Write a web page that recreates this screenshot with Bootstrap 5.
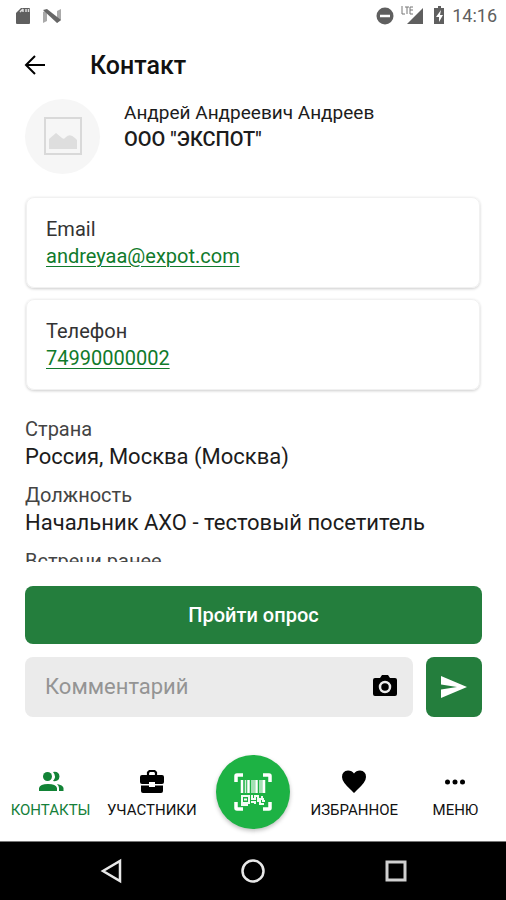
<!DOCTYPE html>
<html lang="ru">
<head>
<meta charset="utf-8">
<meta name="viewport" content="width=device-width, initial-scale=1">
<title>Контакт</title>
<link href="https://cdn.jsdelivr.net/npm/bootstrap@5.3.0/dist/css/bootstrap.min.css" rel="stylesheet">
<style>
  :root { --brand: #247e3d; --accent: #1db244; }
  body { font-family: Roboto, "Noto Sans", sans-serif; font-size: 20px; line-height: 28px; color: #1c1c1c; background: #fff; }
  svg { display: block; flex-shrink: 0; }
  .screen { height: 100vh; min-height: 640px; }
  .status-bar { height: 32px; padding: 0 9px 0 12px; font-size: 18px; color: #5f5f5f; }
  .app-bar { height: 67px; padding: 0 24px; gap: 43px; }
  .app-bar h1 { font-size: 25px; line-height: 32px; font-weight: 500; color: #111; }
  .back-btn { color: #000; }
  .content-area { padding: 0 25px; min-height: 0; }
  .avatar { width: 75px; height: 75px; background: #f6f6f6; }
  .person { font-size: 19px; line-height: 26px; padding-top: 1px; }
  .person h2 { font-size: 20px; line-height: 26px; font-weight: 500; }
  .card-stack { gap: 11px; margin-top: 23px; }
  .info-card { padding: 18px 19px 17px; border-radius: 8px; border: 1px solid #f1f1f1; box-shadow: 0 1px 3px rgba(0,0,0,.2); line-height: 27px; margin: 0 1px; }
  .info-card a { color: #107a2b; text-underline-offset: 3px; text-decoration-thickness: 1px; }
  .info-label { color: #333; }
  .facts { margin-top: 25px; }
  .facts dt { font-weight: 400; color: #444; }
  .facts dd { margin-bottom: 10px; font-size: 22px; }
  .actions { padding: 24px 24px 0 25px; gap: 13px; }
  .survey-btn { height: 58px; font-size: 20px; font-weight: 500; }
  .brand-btn, .brand-btn:hover { background: var(--brand); color: #fff; border: 0; border-radius: 8px; }
  .comment-row { gap: 13px; }
  .comment-box { background: #ebebeb; border-radius: 8px; height: 60px; padding: 0 14px 0 20px; }
  .comment-box input { font-size: 22px; line-height: 28px; outline: 0; min-width: 0; }
  .comment-box input::placeholder { color: #949494; opacity: 1; }
  .send-btn { width: 56px; height: 60px; }
  .tabs { height: 124px; font-size: 15px; line-height: 20px; padding-top: 38px; }
  .tab-slot { flex: 1 1 0; min-width: 0; }
  .tabs a { color: #111; gap: 4px; white-space: nowrap; height: 60px; padding-top: 13px; }
  .tabs a.current { color: #15803a; }
  .tabs .scan-btn { width: 74px; height: 74px; background: var(--accent); box-shadow: 0 2px 4px rgba(0,0,0,.25); }
  .system-bar { height: 59px; border-top: 1px solid #777; background: #000; }
  .system-bar button { flex: 0 0 28%; }
</style>
<script src="https://cdn.jsdelivr.net/npm/bootstrap@5.3.0/dist/js/bootstrap.bundle.min.js"></script>
</head>
<body>
<div class="screen d-flex flex-column overflow-hidden">
  <div class="status-bar d-flex justify-content-between align-items-center flex-shrink-0">
    <div class="d-flex align-items-center gap-2">
      <svg width="22" height="20" viewBox="0 0 22 20"><path d="M4 7l5-5h8q1 0 1 1v14q0 1-1 1H5q-1 0-1-1z" fill="#5f5f5f"/><path d="M8 6l3-3M11 6V3M14 6V3M16.500 6V3" stroke="#ddd" stroke-width="1.500"/></svg>
      <svg width="22" height="20" viewBox="0 0 22 20"><path d="M1 17V6l4-2v11zM15 5l4-2v11l-4 3z" fill="#aaa"/><path d="M1 4l4-1 14 11-4 3z" fill="#666"/></svg>
    </div>
    <div class="d-flex align-items-center">
      <svg width="78" height="24" viewBox="0 0 78 24"><circle cx="11" cy="12" r="8.500" fill="#5f5f5f"/><path d="M6 12h10" stroke="#fff" stroke-width="2.500"/><path d="M49 4v16H33z" fill="#5f5f5f"/><path d="M28 2v8h3M31 3h4M33 3v7M39 3h-3v7h3M36 6h3" fill="none" stroke="#777"/><path d="M62 4h2V2h3v2h3v16H60V4z" fill="#5f5f5f"/><path d="M67 6l-5 7h3v5l4-7h-3z" fill="#fff"/></svg>
      <span>14:16</span>
    </div>
  </div>

  <header class="app-bar d-flex align-items-center flex-shrink-0">
    <button type="button" class="back-btn btn p-0 border-0" aria-label="Назад"><svg width="23" height="24" viewBox="0 0 23 24" fill="none" stroke="#000" stroke-width="2"><path d="M21 11H3M11 2l-9 9 9 9"/></svg></button>
    <h1 class="m-0">Контакт</h1>
  </header>

  <main class="content-area flex-fill overflow-hidden">
    <section class="d-flex gap-4">
      <div class="avatar rounded-circle d-flex align-items-center justify-content-center flex-shrink-0">
        <svg width="40" height="40" viewBox="0 0 40 40"><path d="M2 1h36v36H2z" fill="none" stroke="#d9d9d9" stroke-width="2"/><path d="M6 32V22l7-6 6 5q2 2 4-1 4-4 9 1l2 2v9z" fill="#dedede"/></svg>
      </div>
      <div class="person">
        <div>Андрей Андреевич Андреев</div>
        <h2 class="m-0">ООО "ЭКСПОТ"</h2>
      </div>
    </section>

    <section class="card-stack d-flex flex-column">
      <div class="info-card">
        <div class="info-label">Email</div>
        <a href="mailto:andreyaa@expot.com">andreyaa@expot.com</a>
      </div>
      <div class="info-card">
        <div class="info-label">Телефон</div>
        <a href="tel:74990000002">74990000002</a>
      </div>
    </section>

    <dl class="facts mb-0">
      <dt>Страна</dt>
      <dd>Россия, Москва (Москва)</dd>
      <dt>Должность</dt>
      <dd>Начальник АХО - тестовый посетитель</dd>
      <dt>Встречи ранее</dt>
    </dl>
  </main>

  <form class="actions d-flex flex-column flex-shrink-0">
    <button type="button" class="btn brand-btn survey-btn w-100">Пройти опрос</button>
    <div class="comment-row d-flex">
      <div class="comment-box d-flex align-items-center flex-fill">
        <input type="text" class="border-0 bg-transparent p-0 flex-fill" placeholder="Комментарий" aria-label="Комментарий">
        <button type="button" class="btn p-0 border-0" aria-label="Добавить фото"><svg width="28" height="28" viewBox="0 0 28 28"><path d="M4 5h5l2-3h6l2 3h5q2 0 2 2v14q0 2-2 2H4q-2 0-2-2V7q0-2 2-2z"/><circle cx="14" cy="14" r="5" fill="none" stroke="#ebebeb" stroke-width="2.500"/></svg></button>
      </div>
      <button type="button" class="btn brand-btn send-btn p-0 d-flex align-items-center justify-content-center flex-shrink-0" aria-label="Отправить"><svg width="28" height="24" viewBox="0 0 28 24"><path d="M1 1l26 11L1 23v-8.500L17 12 1 9.500z" fill="#fff"/></svg></button>
    </div>
  </form>

  <nav class="tabs d-flex flex-shrink-0" aria-label="Разделы">
    <a href="#contacts" class="tab-slot current d-flex flex-column align-items-center text-decoration-none" aria-current="page">
      <svg width="28" height="28" viewBox="0 0 28 28" fill="#128336"><circle cx="10.500" cy="8.500" r="4.500"/><path d="M16 4q6-1 6.500 4.500Q22 14 16 13q4-4.500 0-9zM2 23v-3q1-4 9-4t9 4v3zM20 16q6 1 6.500 4v3H22v-3q0-2-2-4z"/></svg>
      <span>КОНТАКТЫ</span>
    </a>
    <a href="#members" class="tab-slot d-flex flex-column align-items-center text-decoration-none">
      <svg width="28" height="28" viewBox="0 0 28 28"><path d="M10 7V4.500L11.500 3h5L18 4.500V7" fill="none" stroke="#000" stroke-width="2.200"/><path d="M4 7h20q2 0 2 2v5q0 2-2 2h-7v-2h-6v2H4q-2 0-2-2V9q0-2 2-2zM3 17.500h8V19h6v-1.500h8V23q0 2-2 2H5q-2 0-2-2z"/></svg>
      <span>УЧАСТНИКИ</span>
    </a>
    <div class="tab-slot d-flex justify-content-center">
      <button type="button" class="scan-btn btn rounded-circle border-0 p-0 d-flex align-items-center justify-content-center" aria-label="Сканировать код">
        <svg width="40" height="40" viewBox="0 0 40 40" fill="none" stroke="#fff"><path d="M3 10V4q0-1 1-1h6M30 3h6q1 0 1 1v6M37 30v6q0 1-1 1h-6M10 37H4q-1 0-1-1v-6" stroke-width="3.500"/><path d="M9 8v13M15.500 8v13M23.500 8v13M31 8v13" stroke-width="2.500"/><path d="M12.500 8v13M19 8v13M21 8v13M27 8v13M29 8v13" stroke-width="1.500" opacity=".8"/><path d="M9 24h7v7H9zM11 27.500h3M19 23v4h3v-3h3v3h6M18 30h4v2M24 29h3v3h4M29 24v2M8 33h7M29 29h3" stroke-width="2" opacity=".95"/></svg>
      </button>
    </div>
    <a href="#favorites" class="tab-slot d-flex flex-column align-items-center text-decoration-none">
      <svg width="28" height="28" viewBox="0 0 28 28"><path d="M14 25L11 22Q2 14 2 9q0-6 6-6.500 4 0 6 3 2-3 6-3 6 .5 6 6.500 0 5-9 13z"/></svg>
      <span>ИЗБРАННОЕ</span>
    </a>
    <a href="#menu" class="tab-slot d-flex flex-column align-items-center text-decoration-none">
      <svg width="28" height="28" viewBox="0 0 28 28"><circle cx="6.500" cy="14" r="2.500"/><circle cx="14" cy="14" r="2.500"/><circle cx="21.500" cy="14" r="2.500"/></svg>
      <span>МЕНЮ</span>
    </a>
  </nav>

  <div class="system-bar d-flex justify-content-center align-items-center flex-shrink-0">
    <button type="button" class="btn border-0 p-0 d-flex justify-content-center" aria-label="Назад"><svg width="26" height="26" viewBox="0 0 26 26"><path d="M22 3v20L5 13z" fill="none" stroke="#e8e8e8" stroke-width="2.500"/></svg></button>
    <button type="button" class="btn border-0 p-0 d-flex justify-content-center" aria-label="Домой"><svg width="26" height="26" viewBox="0 0 26 26"><circle cx="13" cy="13" r="10.500" fill="none" stroke="#e8e8e8" stroke-width="2.500"/></svg></button>
    <button type="button" class="btn border-0 p-0 d-flex justify-content-center" aria-label="Недавние"><svg width="26" height="26" viewBox="0 0 26 26"><path d="M5 4h18v18H5z" fill="none" stroke="#d0d0d0" stroke-width="3"/></svg></button>
  </div>
</div>
</body>
</html>
